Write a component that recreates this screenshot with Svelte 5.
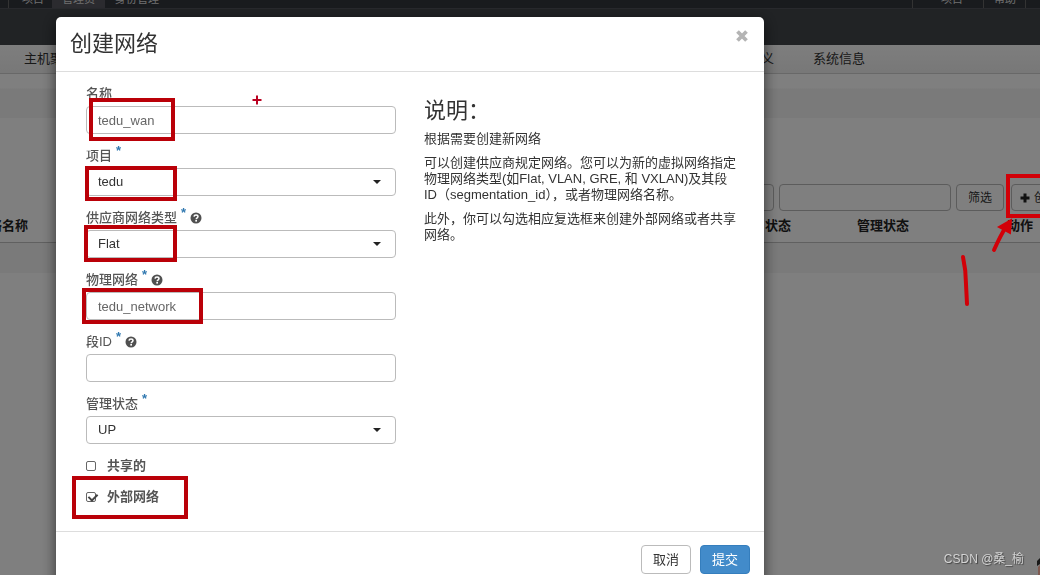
<script>
  let name = $state('tedu_wan');
  let project = $state('tedu');
  let networkType = $state('Flat');
  let physical = $state('tedu_network');
  let segment = $state('');
  let adminState = $state('UP');
  let shared = $state(false);
  let external = $state(true);
</script>

{#snippet help()}
  <svg class="help" viewBox="0 0 12 12" aria-hidden="true">
    <circle cx="6" cy="6" r="5.5" fill="#505050" />
    <path d="M4 4.6C4.1 3.4 4.9 2.9 6 2.9s2 .7 2 1.7C8 5.8 6.2 5.800 6.200 7.200" fill="none" stroke="#fff" stroke-width="1.5" />
    <rect x="5.300" y="8" width="1.700" height="1.600" fill="#fff" />
  </svg>
{/snippet}

<div class="page">
  <header>
    <div class="strip">
      <a class="tab first" href="#project">项目</a>
      <a class="tab active" href="#admin">管理员</a>
      <a class="tab" href="#identity">身份管理</a>
      <div class="account">
        <a href="#current">项目</a>
        <a href="#help">帮助</a>
        <a href="#user"> </a>
      </div>
    </div>
  </header>
  <nav>
    <a href="#aggregates">主机聚合</a>
    <a class="meta" href="#metadata">元数据定义</a>
    <a href="#info">系统信息</a>
  </nav>
  <main>
    <div class="band"></div>
    <div class="toolbar">
      <input class="key" aria-label="筛选项" />
      <input class="term" aria-label="筛选内容" />
      <button>筛选</button>
      <button class="create">
        <svg viewBox="0 0 10 10" aria-hidden="true"><path d="M5 0.500v9M0.500 5h9" stroke="#222" stroke-width="3" /></svg>
        创建网络
      </button>
    </div>
    <table>
      <thead>
        <tr><th class="c1">网络名称</th><th class="c2">状态</th><th class="c3">管理状态</th><th>动作</th></tr>
      </thead>
    </table>
    <div class="row"></div>
  </main>
</div>

<div class="backdrop">
  <section class="modal" role="dialog" aria-labelledby="title">
    <div class="head">
      <h3 id="title">创建网络</h3>
      <button class="close" aria-label="关闭">
        <svg viewBox="0 0 14 14"><path d="M2.500 2.500l9 9M11.500 2.500l-9 9" stroke="#b4b4b4" stroke-width="3.800" /></svg>
      </button>
    </div>
    <div class="body">
      <form id="network">
        <div class="field">
          <label for="name">名称</label>
          <input id="name" bind:value={name} />
        </div>
        <div class="field">
          <label for="project">项目<b>*</b></label>
          <div class="pick"><select id="project" bind:value={project}><option>tedu</option></select></div>
        </div>
        <div class="field">
          <label for="type">供应商网络类型<b>*</b>{@render help()}</label>
          <div class="pick"><select id="type" bind:value={networkType}><option>Flat</option><option>VLAN</option></select></div>
        </div>
        <div class="field">
          <label for="physical">物理网络<b>*</b>{@render help()}</label>
          <input id="physical" bind:value={physical} />
        </div>
        <div class="field">
          <label for="segment">段ID<b>*</b>{@render help()}</label>
          <input id="segment" bind:value={segment} />
        </div>
        <div class="field">
          <label for="state">管理状态<b>*</b></label>
          <div class="pick"><select id="state" bind:value={adminState}><option>UP</option><option>DOWN</option></select></div>
        </div>
        <label class="check"><input type="checkbox" bind:checked={shared} />共享的</label>
        <label class="check"><input type="checkbox" bind:checked={external} />外部网络</label>
      </form>
      <div class="about">
        <h3>说明：</h3>
        <p>根据需要创建新网络</p>
        <p>可以创建供应商规定网络。您可以为新的虚拟网络指定物理网络类型(如Flat, VLAN, GRE, 和 VXLAN)及其段ID（segmentation_id），或者物理网络名称。</p>
        <p>此外，你可以勾选相应复选框来创建外部网络或者共享网络。</p>
      </div>
    </div>
    <div class="foot">
      <button>取消</button>
      <button class="primary">提交</button>
    </div>
  </section>
</div>

<svg class="marks" width="1040" height="575" fill="none" aria-hidden="true">
  <g stroke="#ba0008" stroke-width="4">
    <rect x="91" y="100" width="82" height="39" />
    <rect x="87" y="168" width="88" height="31" />
    <rect x="86" y="227" width="89" height="33" />
    <rect x="84" y="290" width="117" height="32" />
    <rect x="74" y="478" width="112" height="39" />
  </g>
  <path d="M257 95.500v9M252.500 100h9" stroke="#ba0020" stroke-width="2" />
  <g stroke="#d20008" stroke-width="4" stroke-linecap="round">
    <path d="M1042 176H1008V216H1042" stroke-linecap="butt" />
    <path d="M994 250C998 241 1002 233 1007 225" />
    <path d="M1011 220L999 227L1010 233Z" fill="#d20008" stroke-width="2" />
    <path d="M963 257C965 266 966 275 966 284L967 304" />
  </g>
  <path d="M1040 558l-3 3v5l3-2z" fill="#181818" />
  <path d="M1040 565l-2 2v8h2z" fill="#805a50" />
</svg>
<div class="credit">CSDN @桑_榆</div>

<style>
  :global(body) {
    font: 13px/16px "Liberation Sans", "Noto Sans CJK SC", sans-serif;
    color: #333;
    overflow: hidden;
  }
  * { box-sizing: border-box; }
  a { color: inherit; text-decoration: none; white-space: nowrap; }
  input, select, button { font: inherit; color: inherit; }
  h3, p { margin: 0; }

  .page { min-height: 100vh; background: #fff; overflow: hidden; }
  header { height: 45px; background: #42464a; }
  .strip {
    display: flex;
    align-items: flex-end;
    height: 9px;
    padding-left: 8px;
    overflow: hidden;
    background: #33373d;
    border-bottom: 1px solid #50535a;
    font-size: 11px;
    color: #ddd;
  }
  .tab { padding: 0 10px; line-height: 18px; }
  .first { padding: 0 8px 0 13px; border-left: 1px solid #666; }
  .active { background: #56565e; }
  .account { display: flex; margin-left: auto; line-height: 18px; }
  .account a { border-left: 1px solid #666; padding: 0 9px 0 10px; }
  .account a:first-child { padding: 0 20px 0 28px; }
  .account a:last-child { padding: 0 6px; width: 15px; }
  nav {
    display: flex;
    align-items: center;
    gap: 39px;
    height: 29px;
    padding: 0 175px 0 24px;
    background: linear-gradient(#fcfcfc, #f0f0f0);
    border-bottom: 1px solid #d0d0d0;
  }
  .meta { margin-left: auto; }
  .band { height: 44px; margin-bottom: 66px; background: linear-gradient(#fff, #fff 14px, #f4f4f4 15px, #f4f4f4); }
  .toolbar { display: flex; gap: 5px; padding-left: 624px; }
  .toolbar input { flex: none; width: 150px; height: 27px; background: none; border: 1px solid #b8b8b8; border-radius: 4px; }
  .toolbar .term { width: 172px; }
  .toolbar button { flex: none; width: 48px; height: 27px; padding: 0; background: none; border: 1px solid #b8b8b8; border-radius: 4px; font-size: 12px; }
  .toolbar .create { display: flex; align-items: center; gap: 4px; width: 80px; margin-left: 2px; padding-left: 8px; white-space: nowrap; }
  .create svg { flex: none; width: 10px; height: 10px; }
  table { width: calc(100% + 24px); margin-left: -24px; table-layout: fixed; border-collapse: collapse; }
  th { height: 31px; padding: 0; text-align: left; color: #222; border-bottom: 1px solid #c0c0c0; }
  .c1 { width: 789px; }
  .c2 { width: 92px; }
  .c3 { width: 150px; }
  .row { height: 30px; background: #f5f5f5; }

  .backdrop { position: fixed; inset: 0; overflow: hidden; padding: 17px 276px 0 56px; background: rgba(0, 0, 0, 0.5); }
  .modal { background: #fff; border-radius: 5px; box-shadow: 0 4px 14px rgba(0, 0, 0, 0.6); }
  .head { display: flex; justify-content: space-between; align-items: flex-start; padding: 12px 15px 12px 14px; border-bottom: 1px solid #ddd; }
  h3 { font-size: 22px; line-height: 30px; font-weight: 400; }
  .close { display: flex; padding: 0; border: 0; background: none; }
  .close svg { width: 14px; height: 14px; }
  .body { display: grid; grid-template-columns: 310fr 320fr; gap: 28px; padding: 14px 20px 26px 30px; }
  .field { margin-bottom: 14px; }
  .field label { display: flex; align-items: center; height: 16px; margin-bottom: 4px; font-weight: 500; color: #555; }
  .field b { align-self: flex-start; margin: -5px 0 0 4px; color: #3078b0; font-weight: 700; }
  .help { width: 12px; height: 12px; margin-left: 4px; }
  .field input, select {
    display: block;
    width: 100%;
    height: 28px;
    padding: 0 11px;
    background: #fff;
    border: 1px solid #bbb;
    border-radius: 4px;
  }
  .field input { color: #666; }
  select { appearance: none; }
  .pick { position: relative; }
  .pick::after {
    content: "";
    position: absolute;
    right: 15px;
    top: 12px;
    border: solid transparent;
    border-width: 4px 4px 0;
    border-top-color: #222;
    pointer-events: none;
  }
  .check { display: flex; align-items: center; gap: 11px; margin-bottom: 15px; font-weight: 700; color: #555; }
  .check:last-child { margin-bottom: 0; }
  .check input { position: relative; appearance: none; width: 10px; height: 10px; margin: 0; border: 1px solid #666; border-radius: 2px; }
  .check input:checked::after {
    content: "";
    position: absolute;
    left: 3px;
    top: -1px;
    width: 4px;
    height: 7px;
    border: solid #444;
    border-width: 0 2px 2px 0;
    transform: rotate(45deg);
  }
  .about { padding: 10px 6px 0 0; }
  .about h3 { margin-bottom: 5px; }
  .about p { margin-bottom: 8px; }
  .foot { display: flex; justify-content: flex-end; gap: 9px; padding: 13px 14px; border-top: 1px solid #ddd; }
  .foot button { width: 50px; height: 29px; padding: 0; background: #fff; border: 1px solid #bbb; border-radius: 4px; }
  .foot .primary { background: #428bca; border-color: #357ebd; color: #fff; }

  .marks { position: fixed; left: 0; top: 0; pointer-events: none; }
  .credit { position: fixed; right: 16px; bottom: 8px; font-size: 12px; color: #d4d4d4; text-shadow: 1px 1px 1px #444; }
</style>
